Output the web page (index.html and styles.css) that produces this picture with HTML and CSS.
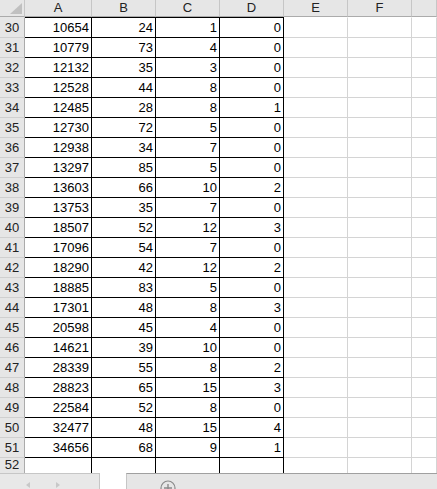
FILE: index.html
```html
<!DOCTYPE html>
<html>
<head>
<meta charset="utf-8">
<link rel="stylesheet" href="styles.css">
</head>
<body>
<div class="sheet">
  <div class="row head">
    <div class="corner"><svg width="24" height="16" viewBox="0 0 24 16"><polygon points="22,3 22,14 10,14" fill="#c0c0c0"/></svg></div>
    <div class="ch">A</div><div class="ch">B</div><div class="ch">C</div><div class="ch">D</div><div class="ch">E</div><div class="ch">F</div><div class="ch last"></div>
  </div>
  <div class="row first"><div class="rh">30</div><div class="c">10654</div><div class="c">24</div><div class="c">1</div><div class="c">0</div><div class="g"></div><div class="g"></div><div class="g"></div></div>
  <div class="row"><div class="rh">31</div><div class="c">10779</div><div class="c">73</div><div class="c">4</div><div class="c">0</div><div class="g"></div><div class="g"></div><div class="g"></div></div>
  <div class="row"><div class="rh">32</div><div class="c">12132</div><div class="c">35</div><div class="c">3</div><div class="c">0</div><div class="g"></div><div class="g"></div><div class="g"></div></div>
  <div class="row"><div class="rh">33</div><div class="c">12528</div><div class="c">44</div><div class="c">8</div><div class="c">0</div><div class="g"></div><div class="g"></div><div class="g"></div></div>
  <div class="row"><div class="rh">34</div><div class="c">12485</div><div class="c">28</div><div class="c">8</div><div class="c">1</div><div class="g"></div><div class="g"></div><div class="g"></div></div>
  <div class="row"><div class="rh">35</div><div class="c">12730</div><div class="c">72</div><div class="c">5</div><div class="c">0</div><div class="g"></div><div class="g"></div><div class="g"></div></div>
  <div class="row"><div class="rh">36</div><div class="c">12938</div><div class="c">34</div><div class="c">7</div><div class="c">0</div><div class="g"></div><div class="g"></div><div class="g"></div></div>
  <div class="row"><div class="rh">37</div><div class="c">13297</div><div class="c">85</div><div class="c">5</div><div class="c">0</div><div class="g"></div><div class="g"></div><div class="g"></div></div>
  <div class="row"><div class="rh">38</div><div class="c">13603</div><div class="c">66</div><div class="c">10</div><div class="c">2</div><div class="g"></div><div class="g"></div><div class="g"></div></div>
  <div class="row"><div class="rh">39</div><div class="c">13753</div><div class="c">35</div><div class="c">7</div><div class="c">0</div><div class="g"></div><div class="g"></div><div class="g"></div></div>
  <div class="row"><div class="rh">40</div><div class="c">18507</div><div class="c">52</div><div class="c">12</div><div class="c">3</div><div class="g"></div><div class="g"></div><div class="g"></div></div>
  <div class="row"><div class="rh">41</div><div class="c">17096</div><div class="c">54</div><div class="c">7</div><div class="c">0</div><div class="g"></div><div class="g"></div><div class="g"></div></div>
  <div class="row"><div class="rh">42</div><div class="c">18290</div><div class="c">42</div><div class="c">12</div><div class="c">2</div><div class="g"></div><div class="g"></div><div class="g"></div></div>
  <div class="row"><div class="rh">43</div><div class="c">18885</div><div class="c">83</div><div class="c">5</div><div class="c">0</div><div class="g"></div><div class="g"></div><div class="g"></div></div>
  <div class="row"><div class="rh">44</div><div class="c">17301</div><div class="c">48</div><div class="c">8</div><div class="c">3</div><div class="g"></div><div class="g"></div><div class="g"></div></div>
  <div class="row"><div class="rh">45</div><div class="c">20598</div><div class="c">45</div><div class="c">4</div><div class="c">0</div><div class="g"></div><div class="g"></div><div class="g"></div></div>
  <div class="row"><div class="rh">46</div><div class="c">14621</div><div class="c">39</div><div class="c">10</div><div class="c">0</div><div class="g"></div><div class="g"></div><div class="g"></div></div>
  <div class="row"><div class="rh">47</div><div class="c">28339</div><div class="c">55</div><div class="c">8</div><div class="c">2</div><div class="g"></div><div class="g"></div><div class="g"></div></div>
  <div class="row"><div class="rh">48</div><div class="c">28823</div><div class="c">65</div><div class="c">15</div><div class="c">3</div><div class="g"></div><div class="g"></div><div class="g"></div></div>
  <div class="row"><div class="rh">49</div><div class="c">22584</div><div class="c">52</div><div class="c">8</div><div class="c">0</div><div class="g"></div><div class="g"></div><div class="g"></div></div>
  <div class="row"><div class="rh">50</div><div class="c">32477</div><div class="c">48</div><div class="c">15</div><div class="c">4</div><div class="g"></div><div class="g"></div><div class="g"></div></div>
  <div class="row"><div class="rh">51</div><div class="c">34656</div><div class="c">68</div><div class="c">9</div><div class="c">1</div><div class="g"></div><div class="g"></div><div class="g"></div></div>
  <div class="row partial"><div class="rh">52</div><div class="c"></div><div class="c"></div><div class="c"></div><div class="c"></div><div class="g"></div><div class="g"></div><div class="g"></div></div>
</div>
<div class="tabs">
  <div class="scroll">
    <svg width="100" height="16" viewBox="0 0 100 16"><polygon points="30,9 26,12 30,15" fill="#c8c8c8"/><polygon points="56,9 60,12 56,15" fill="#c8c8c8"/></svg>
  </div>
  <div class="gap"></div>
  <div class="bar">
    <svg class="plus" width="20" height="16" viewBox="0 0 20 16"><circle cx="10" cy="14" r="7" fill="none" stroke="#8a8a8a" stroke-width="1.2"/><path d="M10 10v8M6 14h8" stroke="#8a8a8a" stroke-width="1.4"/></svg>
  </div>
</div>
</body>
</html>
```
FILE: styles.css
```css
html, body {
  margin: 0;
  padding: 0;
  background: #ffffff;
  overflow: hidden;
  font-family: "Liberation Sans", Arial, sans-serif;
  font-size: 13px;
  color: #000;
}
.sheet {
  height: 473px;
  overflow: hidden;
}
.row {
  display: grid;
  grid-template-columns: 25px 67px 64px 64px 64px 64px 64px 1fr;
  height: 20px;
  box-sizing: border-box;
}
.row > div {
  box-sizing: border-box;
}
.row.head {
  height: 17px;
  background: #e6e6e6;
}
.row.first {
  height: 21px;
}
.row.partial {
  height: 15px;
}
.corner {
  border-right: 1px solid #c6c6c6;
  border-bottom: 1px solid #ababab;
  line-height: 0;
}
.ch {
  border-right: 1px solid #c6c6c6;
  border-bottom: 1px solid #ababab;
  text-align: center;
  line-height: 16px;
  font-size: 13px;
  color: #222;
}
.rh {
  background: #e6e6e6;
  border-right: 1px solid #ababab;
  border-bottom: 1px solid #d0d0d0;
  text-align: center;
  display: flex;
  align-items: flex-end;
  justify-content: center;
  padding-bottom: 3px;
  line-height: 13px;
  color: #222;
}
.c {
  border-right: 1px solid #000;
  border-bottom: 1px solid #000;
  display: flex;
  align-items: flex-end;
  justify-content: flex-end;
  padding: 0 2px 3px 0;
  line-height: 13px;
}
.first .c {
  border-top: 1px solid #000;
}
.first .rh, .first .g {
  border-top: 1px solid transparent;
}
.first .g {
  border-top: 1px solid #ffffff;
}
.g {
  border-right: 1px solid #d4d4d4;
  border-bottom: 1px solid #d4d4d4;
}
.tabs {
  display: flex;
  height: 16px;
}
.scroll {
  width: 100px;
  box-sizing: border-box;
  background: #e8e8e8;
  border-top: 1px solid #c6c6c6;
  border-right: 1px solid #c6c6c6;
  line-height: 0;
}
.scroll svg {
  margin-top: -1px;
}
.gap {
  width: 26px;
  background: #fff;
}
.bar {
  flex: 1;
  background: #e6e6e6;
  border-top: 1px solid #a0a0a0;
  border-left: 1px solid #c6c6c6;
  line-height: 0;
}
.plus {
  margin-left: 31px;
}
```
